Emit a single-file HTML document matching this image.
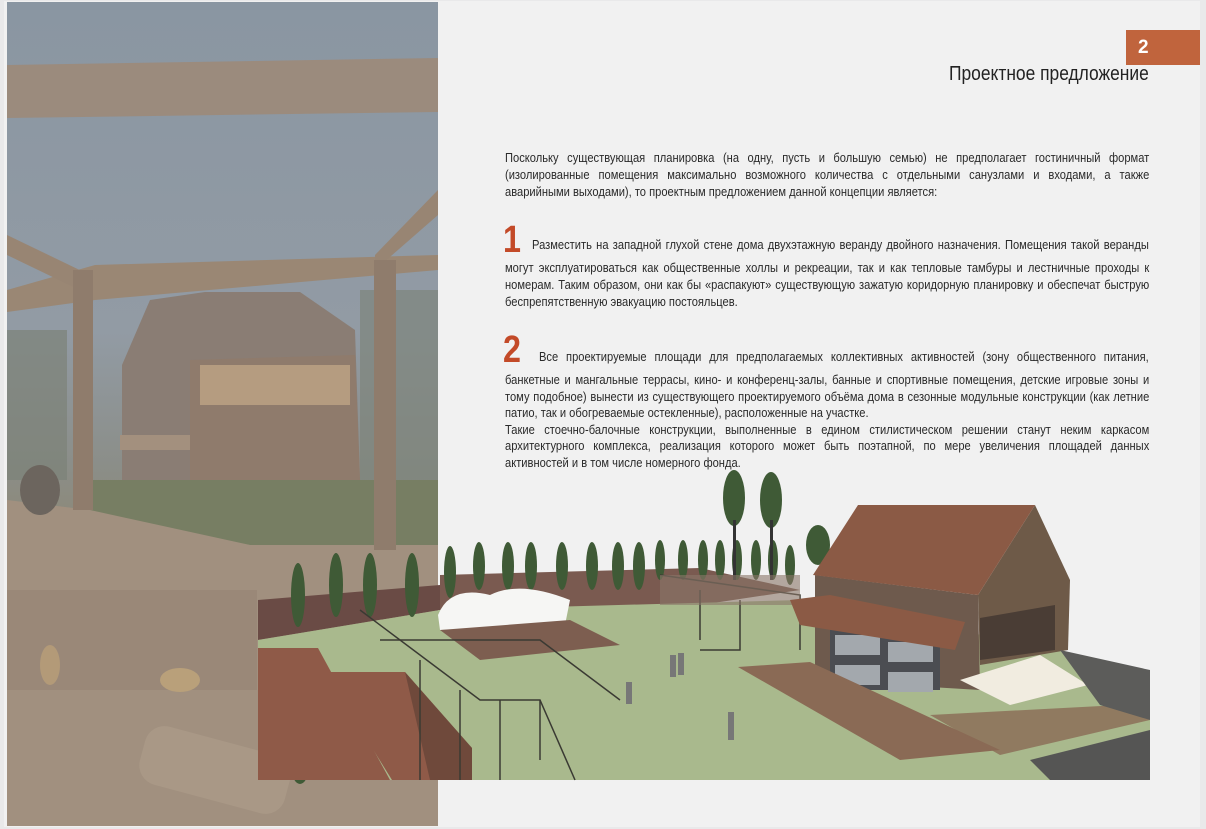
<!DOCTYPE html>
<html><head><meta charset="utf-8"><style>
*{margin:0;padding:0;box-sizing:border-box}
body{width:1206px;height:829px;background:#e9e9ea;position:relative;overflow:hidden;font-family:"Liberation Sans",sans-serif;color:#2a2a2a}
.page{position:absolute;left:4px;top:1px;width:1196px;height:826px;background:#f1f1f1}
.t{position:absolute;left:505px;width:728px;font-size:12.6px;text-align:justify;line-height:17px;transform:scaleX(0.885);transform-origin:0 0}
.one{text-align-last:justify;white-space:nowrap}
.num{color:#c34a28;font-weight:bold;font-size:38px;line-height:30px;position:absolute;transform:scaleX(0.85);transform-origin:0 0}
</style></head><body>
<div class="page"></div>
<svg style="position:absolute;left:0;top:0" width="1206" height="829">
<defs>
<linearGradient id="sky" x1="0" y1="0" x2="0" y2="1">
<stop offset="0" stop-color="#8a96a2"/><stop offset="0.4" stop-color="#929ba4"/><stop offset="0.56" stop-color="#8b8e89"/><stop offset="0.62" stop-color="#8c8a7c"/><stop offset="0.7" stop-color="#a89780"/><stop offset="1" stop-color="#968676"/></linearGradient>
</defs>
<rect x="7" y="2" width="431" height="824" fill="url(#sky)"/>
<polygon points="122,365 150,300 205,292 300,292 355,330 360,480 122,480" fill="#8a7d74"/>
<polygon points="190,360 355,355 360,480 190,480" fill="#8f7b6c"/>
<rect x="200" y="365" width="150" height="40" fill="#b59c80"/>
<rect x="120" y="435" width="70" height="15" fill="#a3907e"/>
<rect x="360" y="290" width="78" height="190" fill="#7e847c" opacity="0.7"/>
<rect x="7" y="330" width="60" height="150" fill="#7c8278" opacity="0.7"/>
<polygon points="90,480 438,480 438,545 250,545 90,520" fill="#777e63"/>
<polygon points="7,500 90,510 250,545 438,545 438,826 7,826" fill="#a1907f"/>
<rect x="7" y="590" width="250" height="100" fill="#9a8878"/>
<ellipse cx="180" cy="680" rx="20" ry="12" fill="#b9a07a"/>
<ellipse cx="50" cy="665" rx="10" ry="20" fill="#b39a78"/>
<rect x="140" y="740" width="150" height="60" rx="20" fill="#a99886" transform="rotate(15 215 770)"/>
<polygon points="7,65 438,58 438,112 7,118" fill="#9b8b7d"/>
<polygon points="7,290 95,265 438,255 438,270 95,300 7,312" fill="#9a8774"/>
<polygon points="7,235 90,275 90,295 7,255" fill="#988573"/>
<polygon points="375,255 438,190 438,215 375,270" fill="#988573"/>
<rect x="73" y="270" width="20" height="240" fill="#8f7c6c"/>
<rect x="374" y="260" width="22" height="290" fill="#8f7c6c"/>
<ellipse cx="40" cy="490" rx="20" ry="25" fill="#6c655e"/>
<polygon points="258,600 440,585 440,610 258,640" fill="#6a4b45"/>
<polygon points="440,575 700,568 800,590 700,605 440,610" fill="#7a5a50"/>
<polygon points="258,640 440,610 800,600 1060,650 1150,690 1150,780 258,780" fill="#a9b98d"/>
<g fill="#3f5a36">
<ellipse cx="298" cy="595" rx="7" ry="32"/><ellipse cx="336" cy="585" rx="7" ry="32"/><ellipse cx="370" cy="585" rx="7" ry="32"/><ellipse cx="412" cy="585" rx="7" ry="32"/><ellipse cx="450" cy="572" rx="6" ry="26"/><ellipse cx="479" cy="566" rx="6" ry="24"/><ellipse cx="508" cy="566" rx="6" ry="24"/><ellipse cx="531" cy="566" rx="6" ry="24"/><ellipse cx="562" cy="566" rx="6" ry="24"/><ellipse cx="592" cy="566" rx="6" ry="24"/><ellipse cx="618" cy="566" rx="6" ry="24"/><ellipse cx="639" cy="566" rx="6" ry="24"/><ellipse cx="660" cy="560" rx="5" ry="20"/><ellipse cx="683" cy="560" rx="5" ry="20"/><ellipse cx="703" cy="560" rx="5" ry="20"/><ellipse cx="720" cy="560" rx="5" ry="20"/><ellipse cx="737" cy="560" rx="5" ry="20"/><ellipse cx="756" cy="560" rx="5" ry="20"/><ellipse cx="773" cy="560" rx="5" ry="20"/><ellipse cx="790" cy="565" rx="5" ry="20"/>
<ellipse cx="734" cy="498" rx="11" ry="28"/><ellipse cx="771" cy="500" rx="11" ry="28"/><ellipse cx="818" cy="545" rx="12" ry="20"/>
<ellipse cx="268" cy="748" rx="9" ry="32"/><ellipse cx="300" cy="770" rx="8" ry="14"/>
</g>
<rect x="733" y="520" width="3" height="60" fill="#333"/><rect x="770" y="520" width="3" height="60" fill="#333"/>
<polygon points="258,648 318,648 390,780 258,780" fill="#8f5a48"/>
<polygon points="325,672 405,672 472,748 472,780 392,780" fill="#8f5a48"/>
<polygon points="405,672 472,748 472,780 430,780" fill="#5a3e33" opacity="0.6"/>
<path d="M438,615 Q450,585 490,595 Q520,580 570,600 L565,625 L440,630 Z" fill="#f6f6f4"/>
<polygon points="440,630 570,620 620,645 480,660" fill="#7d5e50"/>
<g stroke="#3a3a33" stroke-width="1.5" fill="none">
<path d="M360,610 L480,700 L540,700 L575,780"/><path d="M380,640 L540,640 L620,700"/><path d="M420,660 L420,780"/><path d="M460,690 L460,780"/><path d="M500,700 L500,780"/><path d="M540,700 L540,760"/>
<path d="M660,575 L800,595 L800,650 M700,590 L700,640 M740,600 L740,650 L700,650"/>
</g>
<rect x="660" y="575" width="140" height="30" fill="#8a7669" opacity="0.6"/>
<polygon points="1035,505 1070,580 1068,650 980,665 978,595" fill="#6e5a48"/>
<polygon points="815,575 978,595 980,690 815,680" fill="#6e5a4d"/>
<polygon points="858,505 1035,505 978,595 813,575" fill="#8b5a45"/>
<polygon points="980,618 1055,605 1055,650 980,660" fill="#4a3d35"/>
<rect x="830" y="630" width="110" height="60" fill="#4b4d52"/>
<rect x="835" y="635" width="45" height="20" fill="#a3a8ad"/><rect x="888" y="642" width="45" height="20" fill="#a3a8ad"/>
<rect x="835" y="665" width="45" height="20" fill="#a3a8ad"/><rect x="888" y="672" width="45" height="20" fill="#a3a8ad"/>
<polygon points="790,600 830,595 965,622 955,650 800,625" fill="#8b5a45"/>
<polygon points="738,667 810,662 1000,750 900,760" fill="#8a6a55"/>
<polygon points="960,680 1040,655 1088,685 1010,705" fill="#f1ece0"/>
<polygon points="930,715 1120,705 1150,720 1000,755" fill="#8a6a55" opacity="0.8"/>
<polygon points="1030,760 1150,730 1150,780 1050,780" fill="#555554"/>
<polygon points="1060,650 1150,670 1150,720 1100,705" fill="#5c5c5a"/>
<g fill="#777"><rect x="626" y="682" width="6" height="22"/><rect x="670" y="655" width="6" height="22"/><rect x="678" y="653" width="6" height="22"/><rect x="728" y="712" width="6" height="28"/></g>
</svg>
<div style="position:absolute;left:1126px;top:30px;width:74px;height:35px;background:#c0643d;color:#fff;font-weight:bold;font-size:19px;padding-left:12px;line-height:35px">2</div>
<div style="position:absolute;left:949px;top:63px;font-size:20px;color:#222;white-space:nowrap;transform:scaleX(0.87);transform-origin:0 0">Проектное предложение</div>
<div class="t" style="top:150px">Поскольку существующая планировка (на одну, пусть и большую семью) не предполагает гостиничный формат (изолированные помещения максимально возможного количества с отдельными санузлами и входами, а также аварийными выходами), то проектным предложением данной концепции является:</div>
<div class="num" style="left:503px;top:225px">1</div>
<div class="t one" style="top:237px;left:532px;width:697px">Разместить на западной глухой стене дома двухэтажную веранду двойного назначения. Помещения такой веранды</div>
<div class="t" style="top:260px">могут эксплуатироваться как общественные холлы и рекреации, так и как тепловые тамбуры и лестничные проходы к номерам. Таким образом, они как бы «распакуют» существующую зажатую коридорную планировку и обеспечат быструю беспрепятственную эвакуацию постояльцев.</div>
<div class="num" style="left:503px;top:335px">2</div>
<div class="t one" style="top:349px;left:539px;width:689px">Все проектируемые площади для предполагаемых коллективных активностей (зону общественного питания,</div>
<div class="t" style="top:372px;line-height:16.6px">банкетные и мангальные террасы, кино- и конференц-залы, банные и спортивные помещения, детские игровые зоны и тому подобное) вынести из существующего проектируемого объёма дома в сезонные модульные конструкции (как летние патио, так и обогреваемые остекленные), расположенные на участке.<br>Такие стоечно-балочные конструкции, выполненные в едином стилистическом решении станут неким каркасом архитектурного комплекса, реализация которого может быть поэтапной, по мере увеличения площадей данных активностей и в том числе номерного фонда.</div>
</body></html>
